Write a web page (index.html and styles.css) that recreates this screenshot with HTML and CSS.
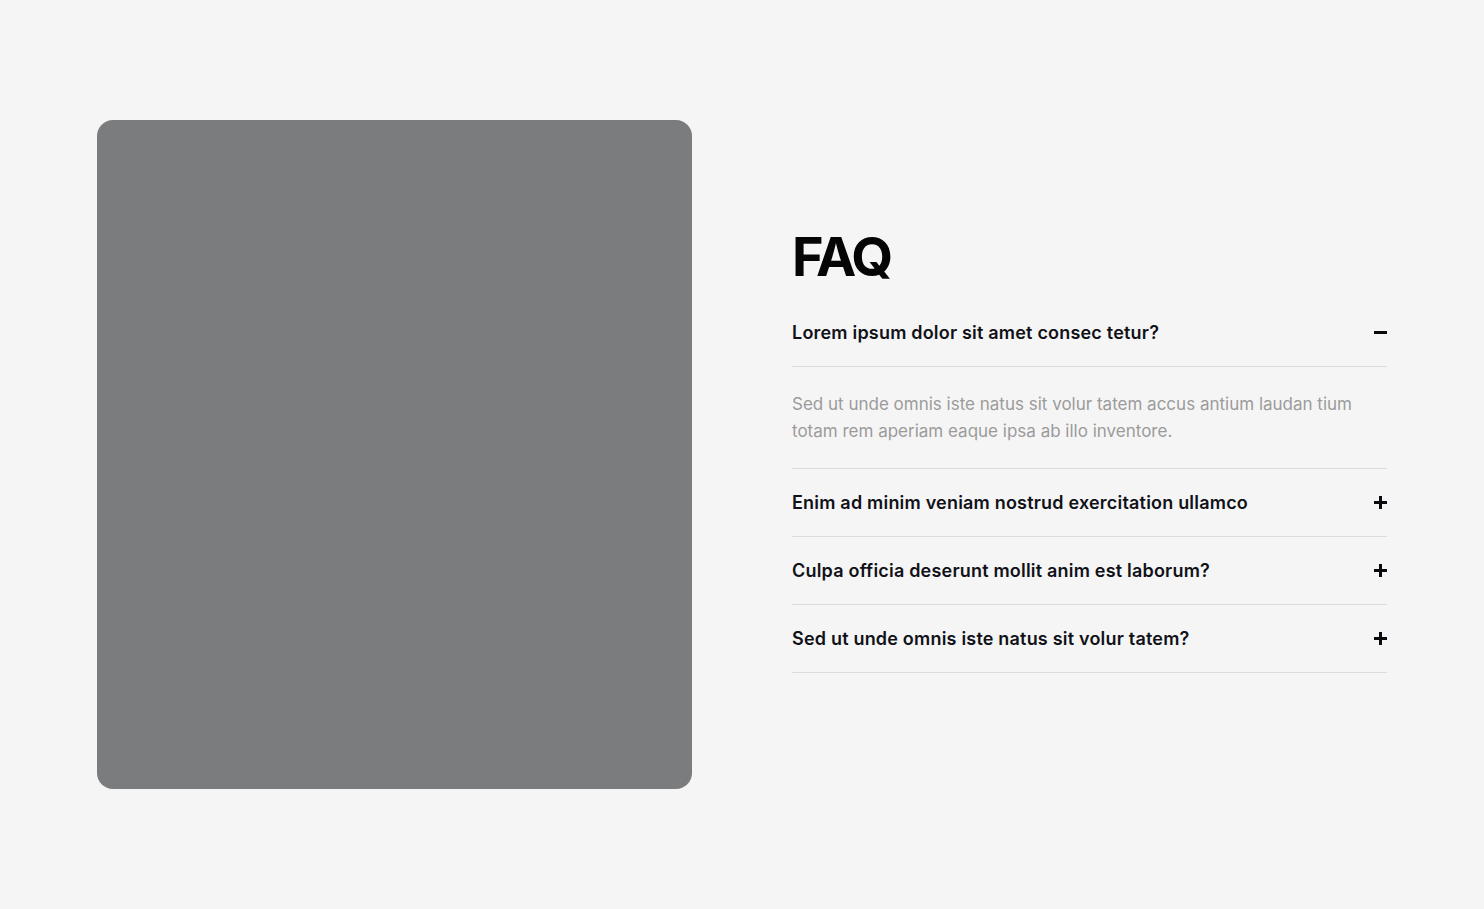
FILE: index.html
```html
<!DOCTYPE html>
<html lang="en">
<head>
<meta charset="utf-8">
<title>FAQ</title>
<link rel="stylesheet" href="styles.css">
</head>
<body>
<section class="faq-section">
  <div class="faq-media"></div>
  <div class="faq-content">
    <h1 class="faq-title">FAQ</h1>
    <div class="faq-list">
      <div class="faq-item open">
        <div class="faq-question">
          <span class="q-text">Lorem ipsum dolor sit amet consec tetur?</span>
          <span class="q-icon minus"></span>
        </div>
        <div class="faq-answer">Sed ut unde omnis iste natus sit volur tatem accus antium laudan tium totam rem aperiam eaque ipsa ab illo inventore.</div>
      </div>
      <div class="faq-item">
        <div class="faq-question">
          <span class="q-text">Enim ad minim veniam nostrud exercitation ullamco</span>
          <span class="q-icon plus"></span>
        </div>
      </div>
      <div class="faq-item">
        <div class="faq-question">
          <span class="q-text">Culpa officia deserunt mollit anim est laborum?</span>
          <span class="q-icon plus"></span>
        </div>
      </div>
      <div class="faq-item">
        <div class="faq-question">
          <span class="q-text">Sed ut unde omnis iste natus sit volur tatem?</span>
          <span class="q-icon plus"></span>
        </div>
      </div>
    </div>
  </div>
</section>
</body>
</html>
```
FILE: styles.css
```css
* { box-sizing: border-box; }
html, body { margin: 0; padding: 0; }
body {
  background: #f5f5f5;
  font-family: Inter, "Noto Sans", sans-serif;
  color: #0d0d12;
}
.faq-section {
  max-width: 1290px;
  margin: 0 auto;
  padding: 120px 0;
  display: grid;
  grid-template-columns: 595px 595px;
  column-gap: 100px;
  align-items: center;
}
.faq-media {
  height: 669px;
  background: #7b7c7d;
  border-radius: 16px;
}
.faq-content {
  padding-bottom: 6px;
}
.faq-title {
  margin: 0 0 15px;
  font-size: 54px;
  line-height: 54px;
  font-weight: 700;
  letter-spacing: -2.8px;
  color: #050505;
}
.faq-question {
  display: flex;
  align-items: center;
  justify-content: space-between;
  padding: 24px 0;
  border-bottom: 1px solid #dcdcdc;
  height: 68px;
}
.q-text {
  font-size: 18px;
  line-height: 19px;
  font-weight: 600;
  letter-spacing: 0.2px;
  color: #111118;
}
.q-icon {
  position: relative;
  width: 13px;
  height: 13px;
  flex: none;
}
.q-icon::before, .q-icon::after {
  content: "";
  position: absolute;
  background: #0a0a0e;
}
.q-icon::before {
  left: 0; right: 0; top: 5.4px; height: 2.3px;
}
.plus::after {
  top: 0; bottom: 0; left: 5.4px; width: 2.3px;
}
.minus::after { display: none; }
.faq-answer {
  padding: 24px 0 23px;
  font-size: 17px;
  line-height: 27px;
  color: #9b9b9b;
  letter-spacing: 0;
  border-bottom: 1px solid #dcdcdc;
  height: 102px;
}
```
